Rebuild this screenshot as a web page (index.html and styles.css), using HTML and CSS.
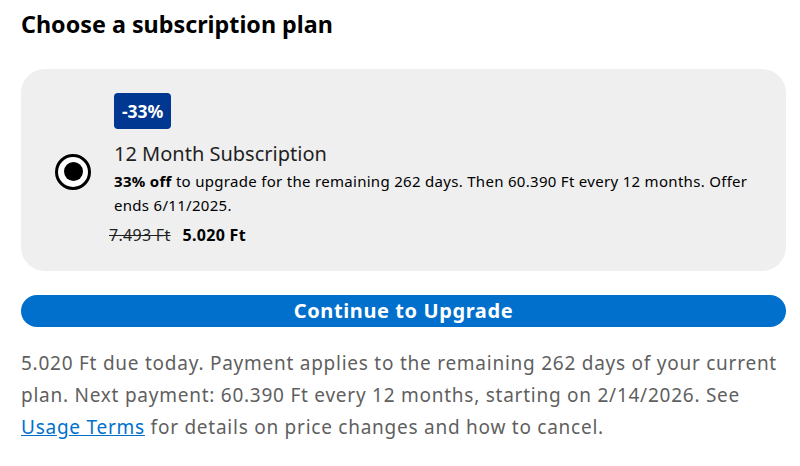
FILE: index.html
```html
<!DOCTYPE html>
<html>
<head>
<meta charset="utf-8">
<link rel="stylesheet" href="styles.css">
</head>
<body>
<main class="page">
  <h1 class="title">Choose a subscription plan</h1>
  <section class="plan">
    <span class="radio"><span class="dot"></span></span>
    <div class="plan-body">
      <span class="badge">-33%</span>
      <h2 class="plan-name">12 Month Subscription</h2>
      <p class="plan-desc"><b>33% off</b> to upgrade for the remaining 262 days. Then 60.390 Ft every 12 months. Offer ends 6/11/2025.</p>
      <div class="price"><s class="old">7.493 Ft</s><b class="new">5.020 Ft</b></div>
    </div>
  </section>
  <button class="cta">Continue to Upgrade</button>
  <p class="note">5.020 Ft due today. Payment applies to the remaining 262 days of your current plan. Next payment: 60.390 Ft every 12 months, starting on 2/14/2026. See <a href="#" class="link">Usage Terms</a> for details on price changes and how to cancel.</p>
</main>
</body>
</html>
```

FILE: styles.css
```css
* { box-sizing: border-box; }
html, body { margin: 0; padding: 0; background: #fff; }
body { font-family: "Noto Sans", "Open Sans", sans-serif; color: #000; }
.page { width: 765px; margin-left: 21px; padding-top: 7px; }
.title { margin: 0; font-size: 23.3px; line-height: 34px; font-weight: 700; color: #000; }
.plan {
  margin-top: 28px;
  background: #efefef;
  border-radius: 24px;
  padding: 23px 24px 24px 34px;
  display: flex;
  align-items: center;
  gap: 23px;
  height: 202px;
}
.radio {
  flex: none;
  width: 36px; height: 36px;
  border: 3px solid #000;
  border-radius: 50%;
  display: flex; align-items: center; justify-content: center;
  background: #fff;
  margin-top: 4px;
}
.dot { width: 19px; height: 19px; border-radius: 50%; background: #000; }
.plan-body { display: flex; flex-direction: column; align-items: flex-start; }
.badge {
  background: #003791; color: #fff; font-weight: 700; font-size: 17.5px;
  line-height: 36px; height: 36px; padding: 0 8px; border-radius: 4px;
}
.plan-name { margin: 12px 0 0; font-size: 20px; font-weight: 400; line-height: 26px; color: #1f1f1f; }
.plan-desc { margin: 2px 0 0; font-size: 15px; letter-spacing: 0.3px; line-height: 24px; color: #000; }
.price { margin-top: 7px; font-size: 16px; letter-spacing: 0.3px; line-height: 22px; display: flex; gap: 12px; margin-left: -5px; }
.old { color: #1f1f1f; }
.new { font-weight: 700; }
.cta {
  display: block; width: 100%; margin-top: 24px; height: 32px;
  border: 0; border-radius: 16px; background: #0070cc; color: #fff;
  font-family: inherit; font-size: 20px; font-weight: 700; padding: 0;
  letter-spacing: 0.6px; line-height: 32px;
}
.note { margin: 20px 0 0; font-size: 19px; letter-spacing: 0.75px; line-height: 32px; color: #5f5f5f; }
.link { color: #0070cc; text-decoration: underline; }
```
